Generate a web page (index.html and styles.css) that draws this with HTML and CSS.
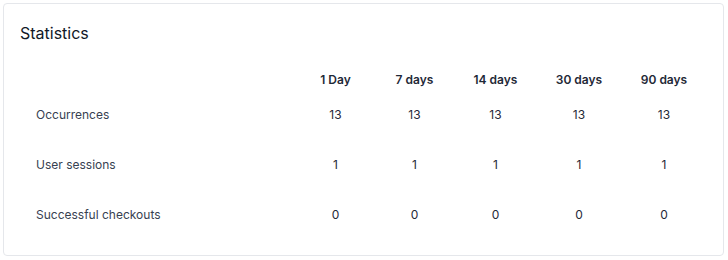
FILE: index.html
```html
<!DOCTYPE html>
<html>
<head>
<meta charset="utf-8">
<link rel="stylesheet" href="styles.css">
</head>
<body>
<section class="card">
  <h2 class="title">Statistics</h2>
  <table class="stats">
    <colgroup>
      <col class="col-label">
      <col class="col-1d">
      <col class="col-7d">
      <col class="col-14d">
      <col class="col-30d">
      <col class="col-90d">
    </colgroup>
    <thead>
      <tr>
        <th class="label-col"></th>
        <th>1 Day</th>
        <th>7 days</th>
        <th>14 days</th>
        <th>30 days</th>
        <th>90 days</th>
      </tr>
    </thead>
    <tbody>
      <tr>
        <td class="label">Occurrences</td>
        <td>13</td><td>13</td><td>13</td><td>13</td><td>13</td>
      </tr>
      <tr>
        <td class="label">User sessions</td>
        <td>1</td><td>1</td><td>1</td><td>1</td><td>1</td>
      </tr>
      <tr>
        <td class="label">Successful checkouts</td>
        <td>0</td><td>0</td><td>0</td><td>0</td><td>0</td>
      </tr>
    </tbody>
  </table>
</section>
</body>
</html>
```

FILE: styles.css
```css
html, body {
  margin: 0;
  padding: 0;
  background: #ffffff;
}
body {
  padding: 3px 4px 4px 3px;
  font-family: Inter, "Noto Sans", sans-serif;
  color: #1f2937;
}
.card {
  box-sizing: border-box;
  width: 721px;
  height: 253px;
  border: 1px solid #e5e7eb;
  border-radius: 4px;
  padding: 16px 16px;
}
.title {
  margin: 0;
  font-size: 16px;
  font-weight: 400;
  line-height: 24px;
  padding-top: 1px;
  color: #111827;
}
.stats {
  width: 100%;
  table-layout: fixed;
  border-collapse: collapse;
  margin-top: 12px;
}
.col-label { width: 276px; }
.col-1d { width: 79px; }
.col-7d { width: 79px; }
.col-14d { width: 83px; }
.col-30d { width: 84px; }
.col-90d { width: 86px; }
.stats th {
  font-size: 12px;
  font-weight: 600;
  color: #1f2937;
  text-align: center;
  padding: 14px 0 1px;
  line-height: 18px;
  white-space: nowrap;
}
.stats td {
  font-size: 12px;
  text-align: center;
  padding: 16px 0;
  line-height: 18px;
  height: 18px;
  color: #1f2937;
}
.stats td.label {
  text-align: left;
  padding-left: 16px;
  color: #374151;
}
```
